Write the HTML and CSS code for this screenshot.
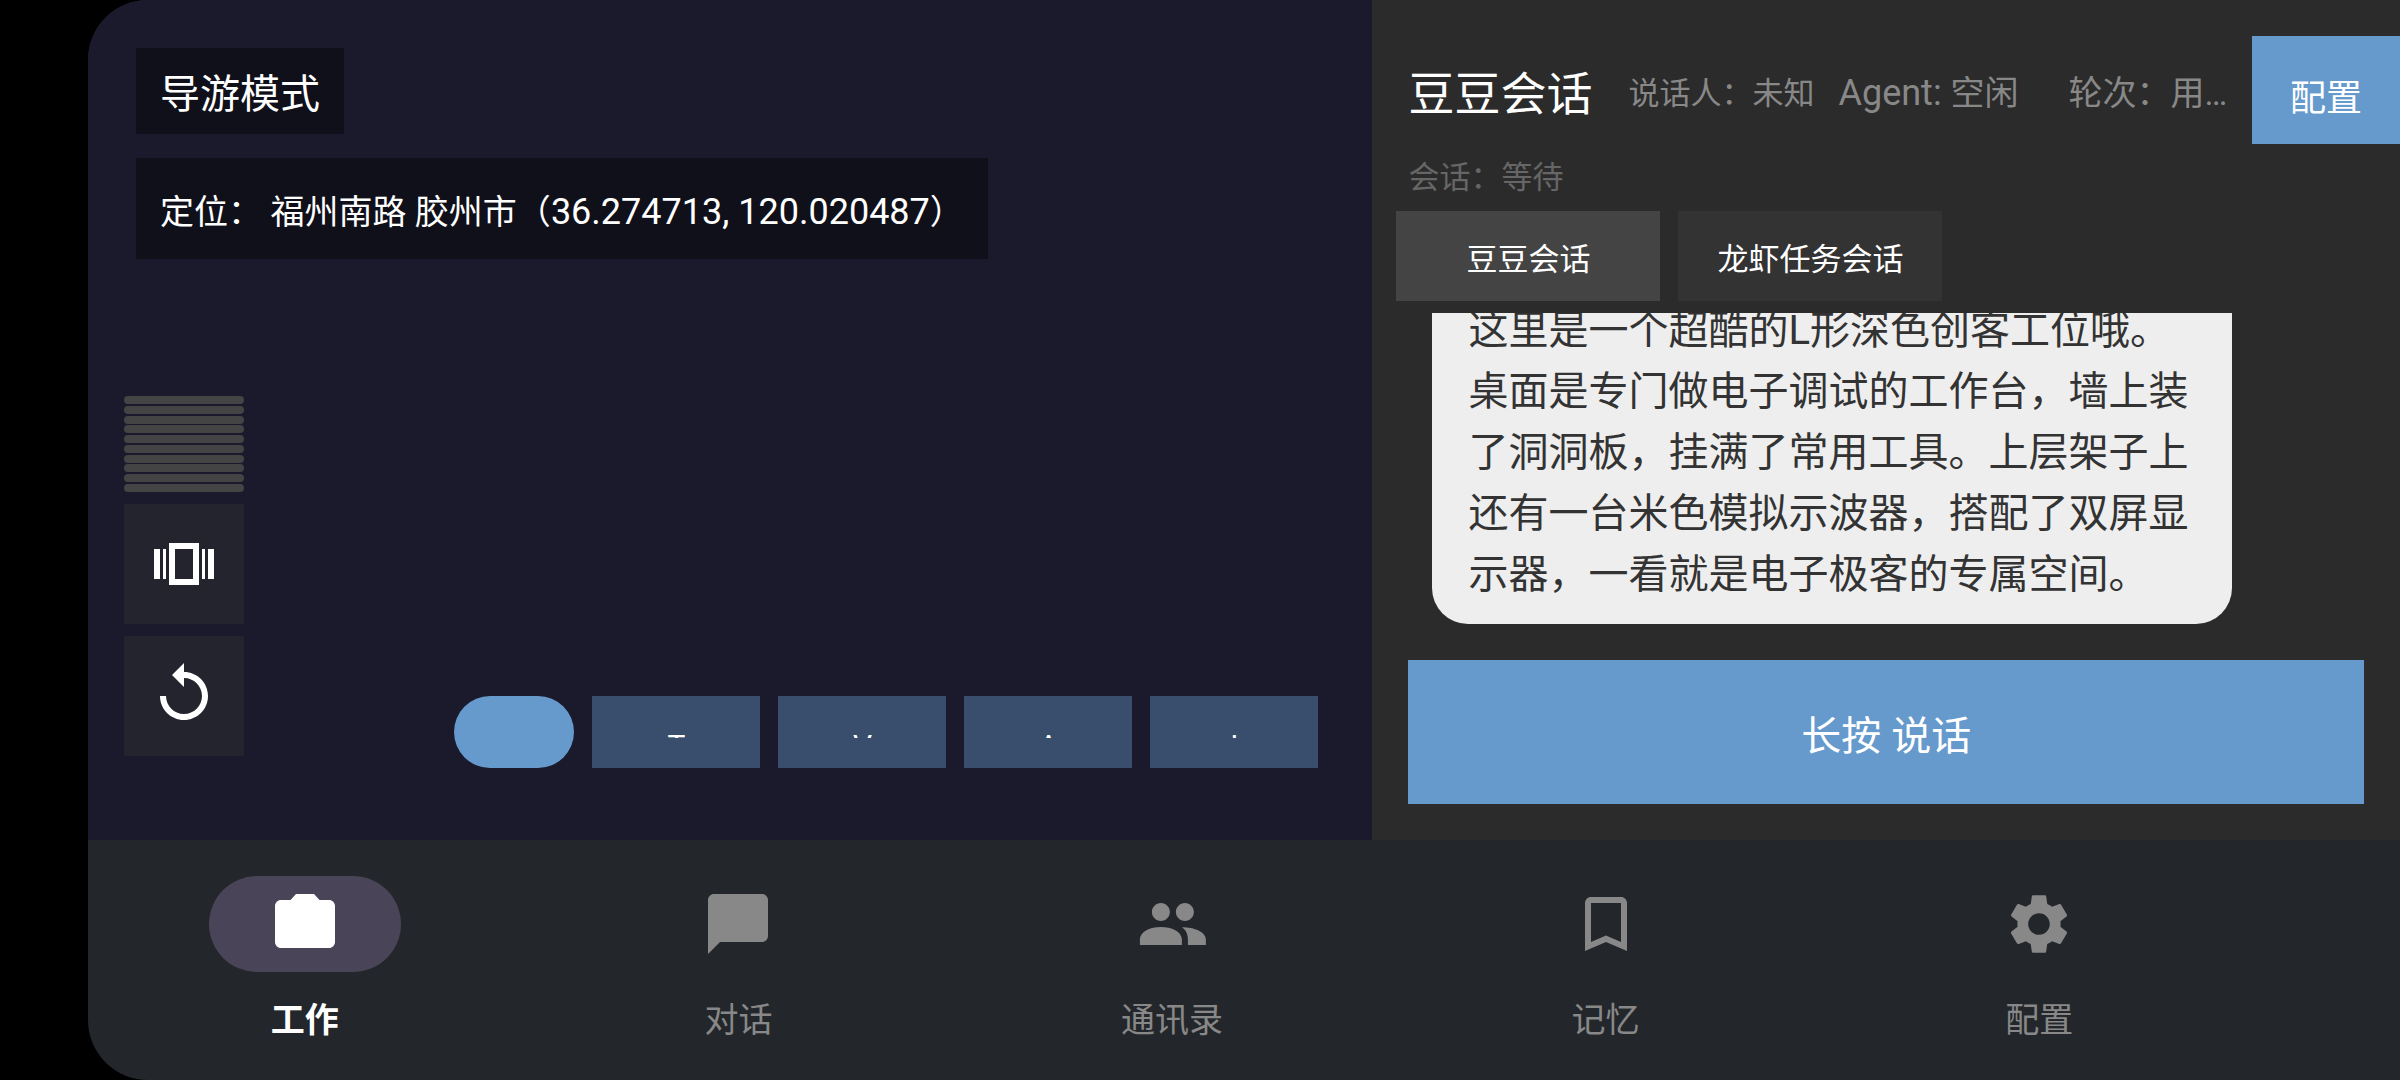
FILE: index.html
```html
<!DOCTYPE html>
<html lang="zh-CN">
<head>
    <meta charset="UTF-8">
    <meta name="viewport" content="width=device-width, initial-scale=1.0">
    <title>导游模式</title>
    <link rel="stylesheet" href="styles.css">
</head>
<body>
    <div class="app">
        <main class="main">
            <section class="stage">
                <div class="chips">
                    <h1 class="chip mode">导游模式</h1>
                    <p class="chip location">定位： 福州南路 胶州市（<span class="latin">36.274713, 120.020487</span>）</p>
                </div>

                <div class="tools">
                    <div class="meter">
                        <span></span><span></span><span></span><span></span><span></span>
                        <span></span><span></span><span></span><span></span><span></span>
                    </div>
                    <button class="tool-btn" aria-label="切换视图">
                        <svg viewBox="0 0 24 24"><path d="M7 5v14h10V5H7zm8 12H9V7h6v10zM2 7h2v10H2zM5 7h1v10H5zM18 7h1v10h-1zM20 7h2v10h-2z"/></svg>
                    </button>
                    <button class="tool-btn" aria-label="旋转">
                        <svg viewBox="0 0 24 24"><path d="M12 4V1L8 5l4 4V6c3.31 0 6 2.69 6 6s-2.69 6-6 6-6-2.69-6-6H4c0 4.42 3.58 8 8 8s8-3.58 8-8-3.58-8-8-8z"/></svg>
                    </button>
                </div>

                <div class="actions">
                    <button class="action-main" aria-label="开始"></button>
                    <button class="action"><span>T</span></button>
                    <button class="action"><span>V</span></button>
                    <button class="action"><span>A</span></button>
                    <button class="action"><span>I</span></button>
                </div>
            </section>

            <section class="chat">
                <div class="chat-header">
                    <h2>豆豆会话</h2>
                    <span class="speaker">说话人：未知</span>
                    <span class="agent"><span class="latin">Agent: </span>空闲</span>
                    <span class="turn">轮次：用…</span>
                    <button class="config-btn">配置</button>
                </div>
                <p class="session">会话：等待</p>
                <div class="tabs">
                    <button class="tab active">豆豆会话</button>
                    <button class="tab">龙虾任务会话</button>
                </div>
                <div class="messages">
                    <p class="bubble">这里是一个超酷的L形深色创客工位哦。<br>桌面是专门做电子调试的工作台，墙上装了洞洞板，挂满了常用工具。上层架子上还有一台米色模拟示波器，搭配了双屏显示器，一看就是电子极客的专属空间。</p>
                </div>
                <button class="talk-btn">长按 说话</button>
            </section>
        </main>

        <nav class="nav">
            <a href="#" class="nav-item active">
                <span class="nav-icon"><svg viewBox="0 0 24 24"><path d="M20 4h-3.17L15 2H9L7.17 4H4c-1.1 0-2 .9-2 2v12c0 1.1.9 2 2 2h16c1.1 0 2-.9 2-2V6c0-1.1-.9-2-2-2z"/></svg></span>
                <span>工作</span>
            </a>
            <a href="#" class="nav-item">
                <span class="nav-icon"><svg viewBox="0 0 24 24"><path d="M20 2H4c-1.1 0-2 .9-2 2v18l4-4h14c1.1 0 2-.9 2-2V4c0-1.1-.9-2-2-2z"/></svg></span>
                <span>对话</span>
            </a>
            <a href="#" class="nav-item">
                <span class="nav-icon"><svg viewBox="0 0 24 24"><path d="M16.300 11c1.66 0 2.99-1.34 2.99-3S17.960 5 16.300 5c-1.66 0-3 1.34-3 3s1.34 3 3 3zM8.300 11c1.66 0 2.99-1.34 2.99-3S9.960 5 8.300 5C6.640 5 5.300 6.340 5.300 8s1.34 3 3 3zM8.300 13c-3.500 0-7 1.500-7 4.200V19h14v-1.800c0-2.700-3.500-4.200-7-4.200zM15.300 13.100c1.300.8 2 2.300 2 4.100V19h6v-1.800c0-2.500-3.800-4.100-8-4.100z"/></svg></span>
                <span>通讯录</span>
            </a>
            <a href="#" class="nav-item">
                <span class="nav-icon"><svg viewBox="0 0 24 24"><path d="M17 3H7c-1.1 0-1.99.9-1.99 2L5 21l7-3 7 3V5c0-1.1-.9-2-2-2zm0 15l-5-2.18L7 18V5h10v13z"/></svg></span>
                <span>记忆</span>
            </a>
            <a href="#" class="nav-item">
                <span class="nav-icon"><svg viewBox="0 0 24 24"><path d="M19.14 12.94c.04-.3.06-.61.06-.94 0-.32-.02-.64-.07-.94l2.03-1.58c.18-.14.23-.41.12-.61l-1.92-3.32c-.12-.22-.37-.29-.59-.22l-2.39.96c-.5-.38-1.03-.7-1.62-.94l-.36-2.54c-.04-.24-.24-.41-.48-.41h-3.84c-.24 0-.43.17-.47.41l-.36 2.54c-.59.24-1.13.57-1.62.94l-2.39-.96c-.22-.08-.47 0-.59.22L2.74 8.87c-.12.21-.08.47.12.61l2.03 1.58c-.05.3-.09.63-.09.94s.02.64.07.94l-2.03 1.58c-.18.14-.23.41-.12.61l1.92 3.32c.12.22.37.29.59.22l2.39-.96c.5.38 1.03.7 1.62.94l.36 2.54c.05.24.24.41.48.41h3.84c.24 0 .44-.17.47-.41l.36-2.54c.59-.24 1.13-.56 1.62-.94l2.39.96c.22.08.47 0 .59-.22l1.92-3.32c.12-.22.07-.47-.12-.61l-2.01-1.58zM12 15.6c-1.98 0-3.6-1.62-3.6-3.6s1.62-3.6 3.6-3.6 3.6 1.62 3.6 3.6-1.62 3.6-3.6 3.6z"/></svg></span>
                <span>配置</span>
            </a>
        </nav>
    </div>
</body>
</html>
```
FILE: styles.css
```css
* {
    box-sizing: border-box;
}
body {
    margin: 0;
    background: #000;
    color: #fff;
    font-family: Roboto, 'Noto Sans CJK SC', sans-serif;
}
h1, h2, p {
    margin: 0;
    font-weight: 400;
}
button {
    border: none;
    padding: 0;
    color: #fff;
    font-family: inherit;
    cursor: pointer;
}
svg {
    display: block;
    width: 72px;
    height: 72px;
    fill: currentColor;
}
.latin {
    font-size: 36px;
}
.app {
    display: flex;
    flex-direction: column;
    height: 100vh;
    margin-left: 88px;
    border-radius: 60px 0 0 60px;
    overflow: hidden;
    background: #23272b;
}
.main {
    flex: 1;
    display: grid;
    grid-template-columns: minmax(0, 5fr) minmax(0, 4fr);
    grid-template-rows: minmax(0, 1fr);
    min-height: 0;
}

/* left side */
.stage {
    display: flex;
    flex-direction: column;
    justify-content: space-between;
    padding: 48px 54px 72px 36px;
    background: #1a1a2c;
    position: relative;
}
.chips {
    display: flex;
    flex-direction: column;
    align-items: flex-start;
    gap: 24px;
    padding-left: 12px;
}
.chip {
    padding: 16px 24px 8px;
    background: #10101a;
}
.mode {
    font-size: 40px;
    line-height: 62px;
}
.location {
    padding: 28px 24px 20px;
    font-size: 34px;
    line-height: 53px;
}
.tools {
    position: absolute;
    left: 36px;
    bottom: 84px;
    display: flex;
    flex-direction: column;
    gap: 12px;
    width: 120px;
}
.meter {
    display: flex;
    flex-direction: column;
    justify-content: space-between;
    height: 96px;
}
.meter span {
    height: 8px;
    border-radius: 4px;
    background: #444;
}
.tool-btn {
    display: flex;
    align-items: center;
    justify-content: center;
    height: 120px;
    background: #24242e;
}
.actions {
    display: flex;
    justify-content: flex-end;
    gap: 18px;
}
.action-main {
    width: 120px;
    height: 72px;
    border-radius: 36px;
    background: #6699cc;
}
.action {
    display: flex;
    align-items: center;
    justify-content: center;
    width: 168px;
    height: 72px;
    padding-top: 6px;
    background: #394d6c;
    font-size: 30px;
}
/* labels are cut to their top edge */
.action span {
    height: 6px;
    line-height: 28px;
    overflow: hidden;
}

/* right side */
.chat {
    display: flex;
    flex-direction: column;
    padding: 36px 36px 36px 24px;
    background: #2b2b2b;
}
.chat-header {
    display: flex;
    align-items: center;
    height: 108px;
    margin-right: -36px;
    padding-left: 12px;
    white-space: nowrap;
    color: #888;
    font-size: 34px;
}
.chat-header h2 {
    color: #fff;
    font-size: 46px;
}
.speaker {
    margin-left: 36px;
    font-size: 31px;
}
.agent {
    margin-left: 24px;
}
.turn {
    margin-left: 50px;
}
.config-btn {
    align-self: stretch;
    width: 148px;
    margin-left: auto;
    padding-top: 10px;
    background: #6699cc;
    font-size: 36px;
}
.session {
    padding: 10px 12px;
    color: #666;
    font-size: 31px;
    line-height: 47px;
}
.tabs {
    display: flex;
    gap: 18px;
    margin-bottom: 12px;
}
.tab {
    width: 264px;
    height: 90px;
    background: #333;
    font-size: 31px;
}
.tab.active {
    background: #444;
}
.messages {
    flex: 1;
    display: flex;
    flex-direction: column;
    justify-content: flex-end;
    min-height: 0;
    padding: 0 36px 36px;
    overflow: hidden;
}
.bubble {
    width: 800px;
    max-width: 100%;
    padding: 24px 36px 19px;
    border-radius: 36px;
    background: #eee;
    color: #333;
    font-size: 40px;
    line-height: 61px;
}
.talk-btn {
    height: 144px;
    margin-left: 12px;
    padding-top: 2px;
    background: #6699cc;
    font-size: 40px;
}

/* bottom bar */
.nav {
    display: flex;
    height: 240px;
    padding: 36px 144px 0 0;
}
.nav-item {
    flex: 1;
    display: flex;
    flex-direction: column;
    align-items: center;
    gap: 22px;
    color: #888;
    font-size: 34px;
    line-height: 52px;
    text-decoration: none;
}
.nav-icon {
    padding: 12px 60px;
    border-radius: 48px;
}
.nav-item.active {
    color: #fff;
    font-weight: 700;
}
.nav-item.active .nav-icon {
    background: #4a4458;
}
```
